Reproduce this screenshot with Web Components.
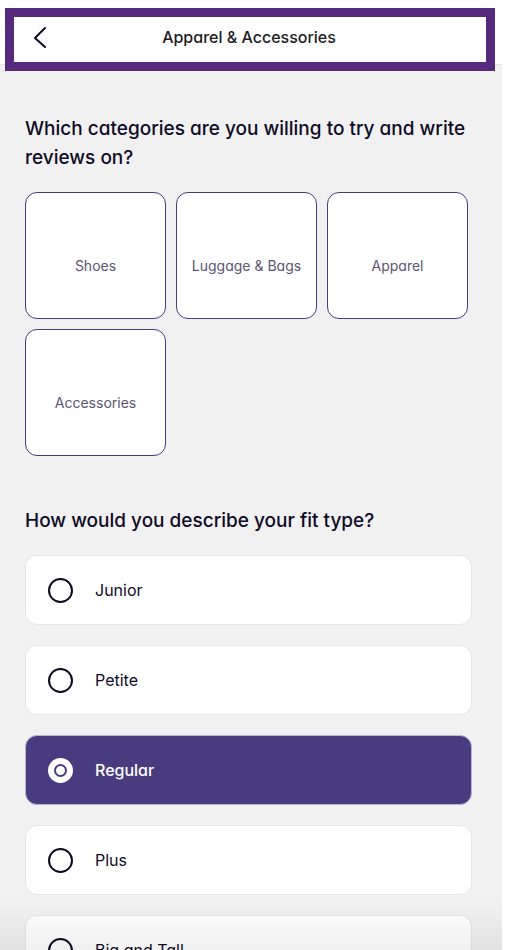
<!DOCTYPE html>
<html lang="en">
<head>
<meta charset="utf-8">
<meta name="viewport" content="width=device-width, initial-scale=1">
<title>Apparel &amp; Accessories</title>
<style>
    body {
        margin: 0;
        background: #fff;
        color: #0f0b26;
        font-family: Inter, "Open Sans", sans-serif;
        font-feature-settings: "cv11";
    }
</style>
</head>
<body>
<survey-screen>
    <survey-header slot="header">Apparel &amp; Accessories</survey-header>
    <survey-question heading="Which categories are you willing to try and write reviews on?">
        <category-grid>
            <category-tile>Shoes</category-tile>
            <category-tile>Luggage &amp; Bags</category-tile>
            <category-tile>Apparel</category-tile>
            <category-tile>Accessories</category-tile>
        </category-grid>
    </survey-question>
    <survey-question heading="How would you describe your fit type?">
        <radio-list name="fit" options="Junior,Petite,Regular,Plus,Big and Tall" value="Regular"></radio-list>
    </survey-question>
</survey-screen>

<script>
class SurveyScreen extends HTMLElement {
    constructor() {
        super();
        this.attachShadow({ mode: 'open' });
        this.shadowRoot.innerHTML = `
            <style>
                :host {
                    display: flex;
                    flex-direction: column;
                    height: 100vh;
                    margin-right: 4px;
                    position: relative;
                }
                main {
                    flex: 1;
                    min-height: 0;
                    overflow-y: auto;
                    scrollbar-width: none;
                    box-sizing: border-box;
                    padding: 49px 30px 49px 25px;
                    background: #f1f1f1;
                    display: flex;
                    flex-direction: column;
                    gap: 50px;
                }
                .fade {
                    position: absolute;
                    left: 0;
                    right: 0;
                    bottom: 0;
                    height: 50px;
                    background: linear-gradient(rgba(0, 0, 0, 0), rgba(0, 0, 0, 0.06));
                    pointer-events: none;
                }
            </style>
            <slot name="header"></slot>
            <main><slot></slot></main>
            <div class="fade"></div>
        `;
    }
}

class SurveyHeader extends HTMLElement {
    constructor() {
        super();
        this.attachShadow({ mode: 'open' });
        this.shadowRoot.innerHTML = `
            <style>
                :host {
                    display: block;
                    position: relative;
                    z-index: 1;
                    background: #fff;
                    border-bottom: 1px solid #e3e3e5;
                }
                header {
                    display: grid;
                    grid-template-columns: 48px 1fr 48px;
                    align-items: center;
                    height: 64px;
                    padding: 10px 20px 0 16px;
                    box-sizing: border-box;
                }
                button {
                    display: flex;
                    align-items: center;
                    justify-content: center;
                    width: 48px;
                    height: 48px;
                    padding: 0;
                    border: 0;
                    background: none;
                    color: #0f0b26;
                    cursor: pointer;
                }
                h1 {
                    margin: 0;
                    font-size: 16px;
                    line-height: 24px;
                    font-weight: 500;
                    text-align: center;
                    color: #1c1c1e;
                }
                .frame {
                    position: absolute;
                    top: 8px;
                    left: 5px;
                    right: 7px;
                    bottom: -7px;
                    border: 9px solid #562b7e;
                    pointer-events: none;
                }
            </style>
            <header>
                <button type="button" aria-label="Back">
                    <svg width="14" height="22" viewBox="0 0 14 22" fill="none" stroke="currentColor" stroke-width="2" stroke-linecap="round" stroke-linejoin="round">
                        <path d="M12 2 2 12l10 9"/>
                    </svg>
                </button>
                <h1><slot></slot></h1>
            </header>
            <div class="frame"></div>
        `;
    }
}

class SurveyQuestion extends HTMLElement {
    constructor() {
        super();
        this.attachShadow({ mode: 'open' });
        this.shadowRoot.innerHTML = `
            <style>
                :host { display: block; }
                h2 {
                    margin: 0 0 20px;
                    font-size: 19px;
                    line-height: 29px;
                    font-weight: 500;
                }
            </style>
            <h2></h2>
            <slot></slot>
        `;
    }

    connectedCallback() {
        this.shadowRoot.querySelector('h2').textContent = this.getAttribute('heading');
    }
}

class CategoryGrid extends HTMLElement {
    constructor() {
        super();
        this.attachShadow({ mode: 'open' });
        this.shadowRoot.innerHTML = `
            <style>
                :host {
                    display: grid;
                    grid-template-columns: repeat(3, 1fr);
                    gap: 10px;
                    margin-right: 4px;
                }
            </style>
            <slot></slot>
        `;
    }
}

class CategoryTile extends HTMLElement {
    constructor() {
        super();
        this.attachShadow({ mode: 'open' });
        this.shadowRoot.innerHTML = `
            <style>
                :host { display: block; }
                button {
                    display: block;
                    box-sizing: border-box;
                    width: 100%;
                    height: 127px;
                    padding: 20px 0 0;
                    border: 1px solid #483b80;
                    border-radius: 12px;
                    background: #fff;
                    color: #5b5672;
                    font: inherit;
                    font-feature-settings: inherit;
                    font-size: 14px;
                    line-height: 20px;
                    text-align: center;
                    cursor: pointer;
                }
                button[aria-pressed="true"] {
                    background: #483b80;
                    color: #fff;
                }
            </style>
            <button type="button" aria-pressed="false"><slot></slot></button>
        `;
        const button = this.shadowRoot.querySelector('button');
        button.addEventListener('click', () => {
            const pressed = button.getAttribute('aria-pressed') === 'true';
            button.setAttribute('aria-pressed', String(!pressed));
        });
    }
}

// All radios share one shadow root so the browser groups them by name
class RadioList extends HTMLElement {
    constructor() {
        super();
        this.attachShadow({ mode: 'open' });
    }

    connectedCallback() {
        const name = this.getAttribute('name');
        const value = this.getAttribute('value');
        const options = this.getAttribute('options').split(',');
        this.shadowRoot.innerHTML = `
            <style>
                :host {
                    display: flex;
                    flex-direction: column;
                    gap: 20px;
                }
                label {
                    display: flex;
                    align-items: center;
                    gap: 22px;
                    box-sizing: border-box;
                    min-height: 70px;
                    padding: 0 22px;
                    border: 1px solid #e6e5ee;
                    border-radius: 12px;
                    background: #fff;
                    font-size: 16px;
                    line-height: 24px;
                    cursor: pointer;
                }
                label:has(:checked) {
                    background: #483b80;
                    border-color: #b9b4d0;
                    color: #fff;
                    font-weight: 500;
                }
                input {
                    appearance: none;
                    box-sizing: border-box;
                    flex: none;
                    width: 25px;
                    height: 25px;
                    margin: 0;
                    border: 2px solid #0f0b1e;
                    border-radius: 50%;
                    background: #fff;
                }
                input:checked {
                    display: grid;
                    place-items: center;
                    border-color: #fff;
                }
                input:checked::before {
                    content: "";
                    box-sizing: border-box;
                    width: 13px;
                    height: 13px;
                    border: 2px solid #483b80;
                    border-radius: 50%;
                }
            </style>
            ${options.map(option => `
                <label>
                    <input type="radio" name="${name}" value="${option}" ${option === value ? 'checked' : ''}>
                    <span>${option}</span>
                </label>
            `).join('')}
        `;
    }
}

customElements.define('survey-screen', SurveyScreen);
customElements.define('survey-header', SurveyHeader);
customElements.define('survey-question', SurveyQuestion);
customElements.define('category-grid', CategoryGrid);
customElements.define('category-tile', CategoryTile);
customElements.define('radio-list', RadioList);
</script>
</body>
</html>
